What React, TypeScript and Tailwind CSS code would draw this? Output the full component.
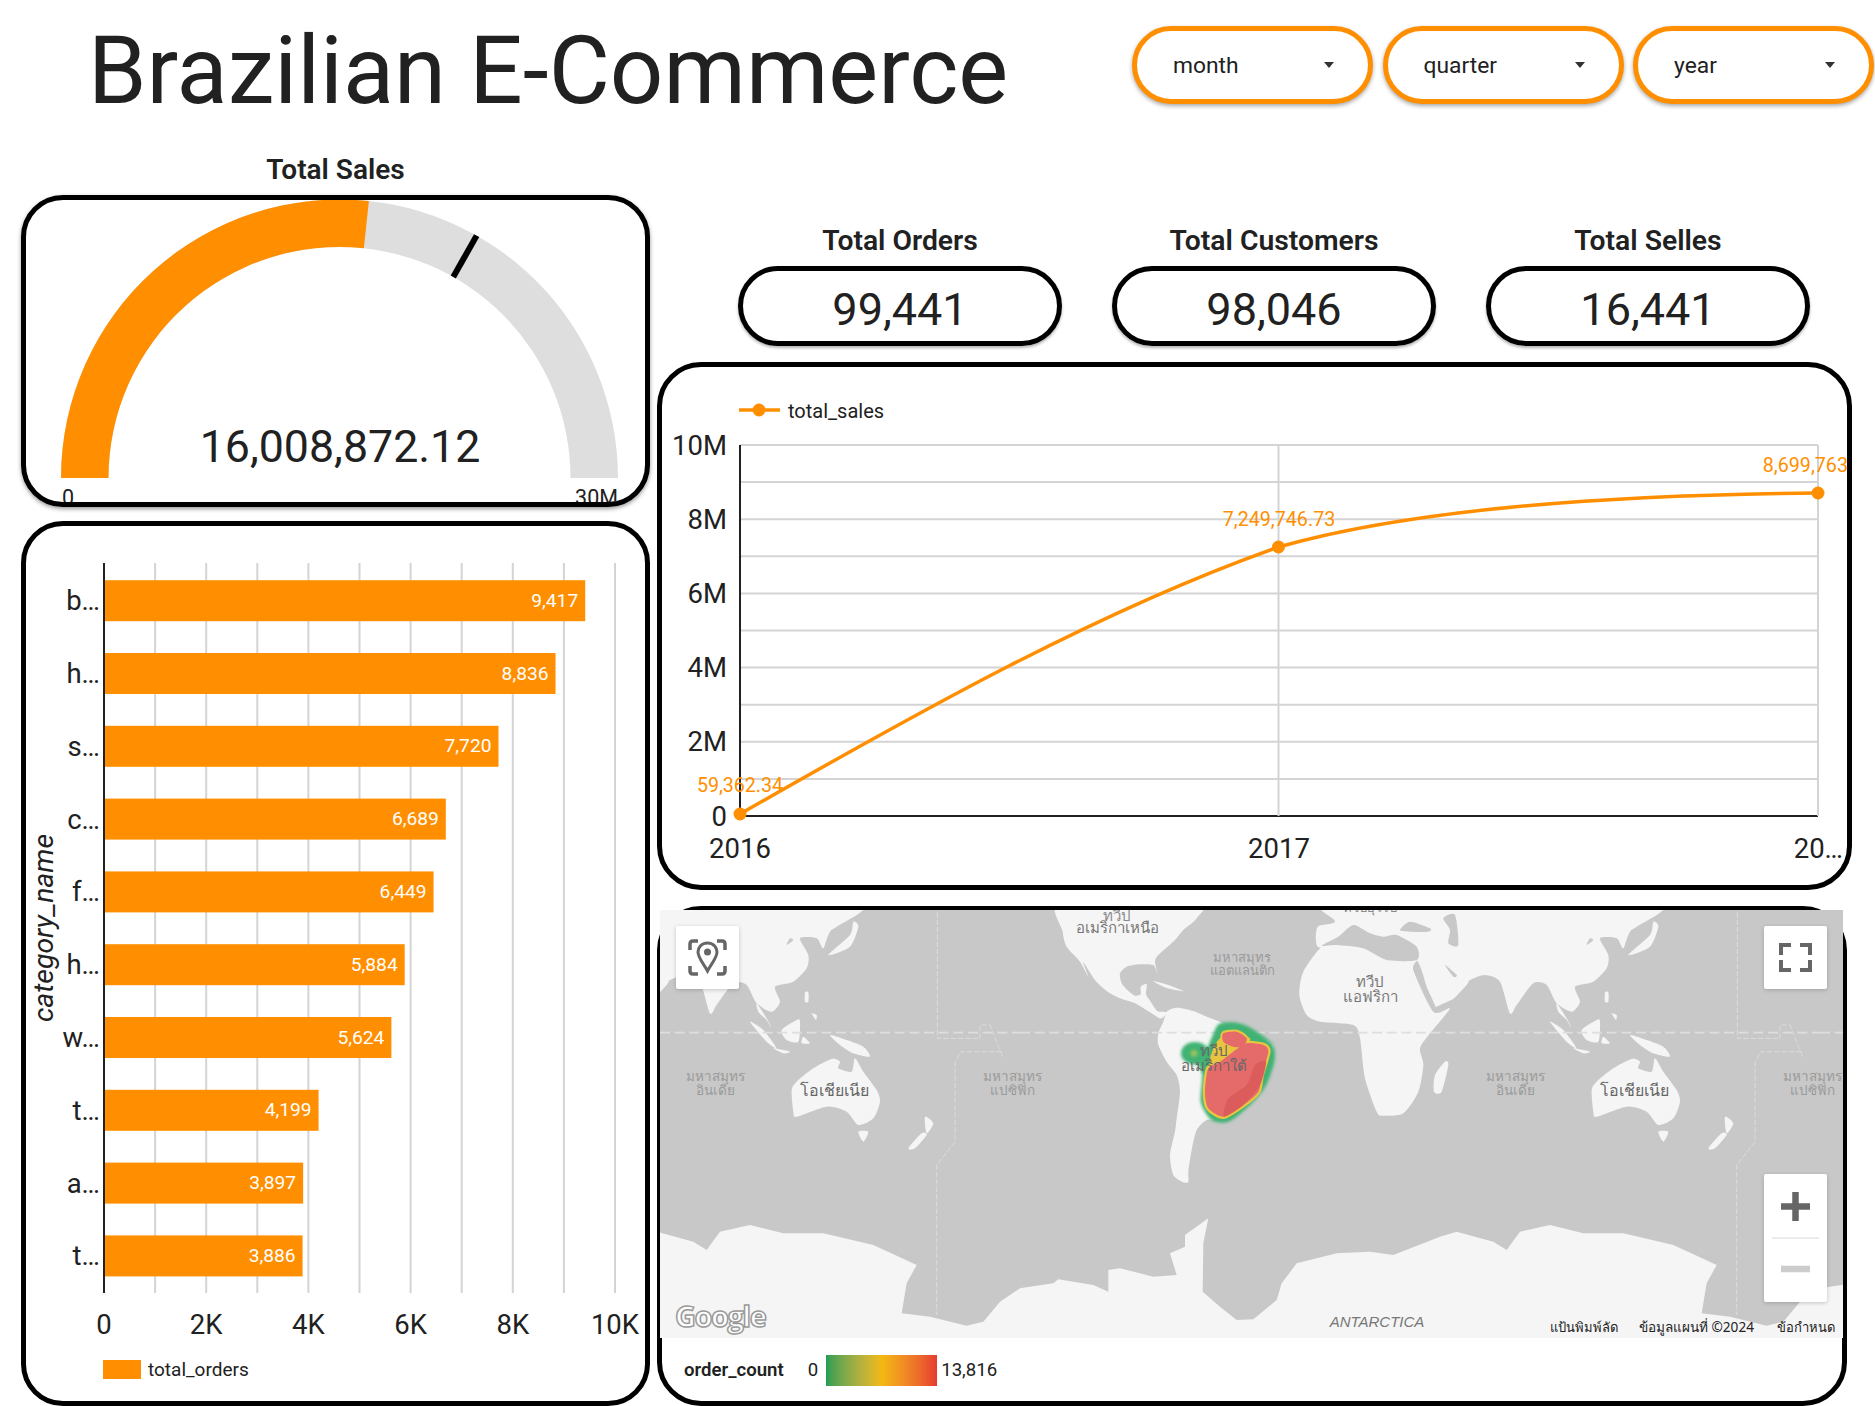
import React from "react";

const ORANGE = "#ff8f00";
const bars: [string, number][] = [
  ["b…", 9417], ["h…", 8836], ["s…", 7720], ["c…", 6689], ["f…", 6449],
  ["h…", 5884], ["w…", 5624], ["t…", 4199], ["a…", 3897], ["t…", 3886],
];
const X0 = 104;
const PER_K = 51.1;
const LINE_Y = (m: number) => 816 - m * 37.1;

function smooth(points: string) {
  const p = points.trim().split(/\s+/).map((s) => s.split(",").map(Number));
  const n = p.length;
  let d = `M${p[0][0]} ${p[0][1]}`;
  for (let i = 0; i < n; i++) {
    const a = p[(i - 1 + n) % n], b = p[i], c = p[(i + 1) % n], e = p[(i + 2) % n];
    d += ` C${b[0] + (c[0] - a[0]) / 8} ${b[1] + (c[1] - a[1]) / 8} ${c[0] - (e[0] - b[0]) / 8} ${c[1] - (e[1] - b[1]) / 8} ${c[0]} ${c[1]}`;
  }
  return d + " Z";
}

function Dropdown({ label }: { label: string }) {
  return (
    <div className="flex h-[78px] w-[241px] items-center justify-between rounded-[39px] border-[5px] border-[#ff8f00] bg-white pt-[2px] pl-[36px] pr-[34px] text-[22.8px] shadow-[0_2px_4px_rgba(0,0,0,0.35)]">
      <span>{label}</span>
      <svg width="10" height="6" viewBox="0 0 10 6" className="-mt-[3px]"><polygon points="0,0 10,0 5,6" fill="#333" /></svg>
    </div>
  );
}

function Score({ title, value }: { title: string; value: string }) {
  return (
    <div className="flex w-[324px] flex-col items-center">
      <div className="h-[30px] text-[28.3px] leading-[30px] font-semibold">{title}</div>
      <div className="mt-[10px] flex h-[80px] w-full items-center justify-center rounded-[40px] border-[5px] border-black pt-[7px] text-[45px] shadow-[0_2px_3px_rgba(0,0,0,0.3)]">
        {value}
      </div>
    </div>
  );
}

function Gauge() {
  const R = 278.5, r = 231, cx = 339.5, cy = 478;
  const a = ((180 - (16008872.12 / 30000000) * 180) * Math.PI) / 180;
  const t = (60.5 * Math.PI) / 180;
  const px = (rad: number, ang: number) => `${cx + rad * Math.cos(ang)} ${cy - rad * Math.sin(ang)}`;
  return (
    <svg className="block h-full w-full" viewBox="26 200 619 302" overflow="hidden">
      <path d={`M${cx - R} ${cy} A${R} ${R} 0 0 1 ${cx + R} ${cy} L${cx + r} ${cy} A${r} ${r} 0 0 0 ${cx - r} ${cy} Z`} fill="#dedede" />
      <path d={`M${cx - R} ${cy} A${R} ${R} 0 0 1 ${px(R, a)} L${px(r, a)} A${r} ${r} 0 0 0 ${cx - r} ${cy} Z`} fill={ORANGE} />
      <line x1={cx + r * Math.cos(t)} y1={cy - r * Math.sin(t)} x2={cx + R * Math.cos(t)} y2={cy - R * Math.sin(t)} stroke="#000" strokeWidth="6" />
      <text x="340" y="462" textAnchor="middle" fontSize="44.7" fill="#212121">16,008,872.12</text>
      <text x="62" y="505" fontSize="21.5" fill="#212121">0</text>
      <text x="618" y="505" textAnchor="end" fontSize="21.5" fill="#212121">30M</text>
    </svg>
  );
}

function BarChart() {
  return (
    <svg className="block h-full w-full" viewBox="26 526 619 875">
      {Array.from({ length: 10 }, (_, i) => (
        <line key={i} x1={X0 + (i + 1) * PER_K} x2={X0 + (i + 1) * PER_K} y1="563" y2="1293" stroke="#d4d4d4" strokeWidth="2" />
      ))}
      {bars.map(([l, v], i) => {
        const y = 580.2 + i * 72.8;
        const w = (v / 1000) * PER_K;
        return (
          <g key={i}>
            <rect x={X0} y={y} width={w} height="41" fill={ORANGE} />
            <text x={X0 + w - 7} y={y + 20} dominantBaseline="central" textAnchor="end" fontSize="19.2" fill="#fff">
              {v.toLocaleString("en-US")}
            </text>
            <text x="100" y={y + 20.5} dominantBaseline="central" textAnchor="end" fontSize="27.5" fill="#212121">{l}</text>
          </g>
        );
      })}
      <line x1={X0} x2={X0} y1="563" y2="1293" stroke="#212121" strokeWidth="2" />
      {["0", "2K", "4K", "6K", "8K", "10K"].map((l, i) => (
        <text key={l} x={X0 + i * 2 * PER_K} y="1324" dominantBaseline="central" textAnchor="middle" fontSize="27.5" fill="#212121">{l}</text>
      ))}
      <text transform="translate(43 928) rotate(-90)" textAnchor="middle" dominantBaseline="central" fontSize="28.4" fontStyle="italic" fill="#212121">category_name</text>
      <rect x="103" y="1360" width="38" height="19" fill={ORANGE} />
      <text x="148" y="1369" dominantBaseline="central" fontSize="19" fill="#212121">total_orders</text>
    </svg>
  );
}

function LineChart() {
  const hs = Array.from({ length: 11 }, (_, i) => i);
  return (
    <svg className="block h-full w-full" viewBox="662 367 1185 518" overflow="visible">
      {hs.map((i) => (
        <line key={i} x1="740" x2="1818" y1={LINE_Y(i)} y2={LINE_Y(i)} stroke={i === 0 ? "#212121" : "#d4d4d4"} strokeWidth="2" />
      ))}
      {[1278.5, 1818].map((x) => (
        <line key={x} x1={x} x2={x} y1="445" y2="816" stroke="#d4d4d4" strokeWidth="2" />
      ))}
      <line x1="740" x2="740" y1="445" y2="816" stroke="#212121" strokeWidth="2" />
      {[0, 2, 4, 6, 8, 10].map((m) => (
        <text key={m} x="727" y={LINE_Y(m)} dominantBaseline="central" textAnchor="end" fontSize="27.5" fill="#212121">
          {m === 0 ? "0" : `${m}M`}
        </text>
      ))}
      <path d="M740 814 C920 711 1100 610 1278.5 547 C1420 507 1620 495 1818 493" fill="none" stroke={ORANGE} strokeWidth="3.5" />
      {[[740, 814], [1278.5, 547], [1818, 493]].map(([x, y]) => (
        <circle key={x} cx={x} cy={y} r="6.5" fill={ORANGE} />
      ))}
      <line x1="739" x2="780" y1="410" y2="410" stroke={ORANGE} strokeWidth="3.5" />
      <circle cx="759" cy="410" r="6.5" fill={ORANGE} />
      <text x="788" y="411" dominantBaseline="central" fontSize="20" fill="#212121">total_sales</text>
      <text x="740" y="785" dominantBaseline="central" textAnchor="middle" fontSize="19.6" fill={ORANGE}>59,362.34</text>
      <text x="1279" y="519" dominantBaseline="central" textAnchor="middle" fontSize="19.7" fill={ORANGE}>7,249,746.73</text>
      <text x="1848" y="465" dominantBaseline="central" textAnchor="end" fontSize="19.7" fill={ORANGE}>8,699,763</text>
      <text x="740" y="848" dominantBaseline="central" textAnchor="middle" fontSize="27.5" fill="#212121">2016</text>
      <text x="1279" y="848" dominantBaseline="central" textAnchor="middle" fontSize="27.5" fill="#212121">2017</text>
      <text x="1843" y="848" dominantBaseline="central" textAnchor="end" fontSize="27.5" fill="#212121">20…</text>
    </svg>
  );
}

const LAND = [
  // North America
  "125,-20 540,-20 530,40 490,75 465,105 415,150 405,170 412,205 400,180 360,178 320,185 300,205 305,235 325,258 345,272 362,268 362,245 380,238 378,268 392,290 412,318 440,322 425,340 410,335 390,322 345,295 300,280 260,258 225,225 190,172 205,215 180,170 140,125 128,80",
  // Cuba, Hispaniola
  "400,228 445,240 490,258 465,255 430,245",
  // South America
  "440,320 470,308 520,318 560,335 600,350 640,370 700,385 760,420 745,480 720,540 680,590 625,630 590,645 560,645 530,675 515,735 505,800 505,830 490,832 460,810 450,750 465,680 470,640 480,560 470,510 440,470 415,420 415,385 430,350",
  // Africa
  "905,125 850,200 838,270 860,330 900,350 1000,360 1020,400 1035,520 1070,620 1090,632 1150,625 1195,560 1210,480 1200,430 1230,385 1290,310 1240,320 1180,195 1190,160 1100,160 1030,130 950,120",
  // Eurasia
  "945,-20 945,50 893,65 893,125 960,125 1100,170 1190,165 1240,305 1290,290 1340,240 1350,225 1395,210 1440,230 1470,325 1490,300 1540,235 1580,240 1610,295 1655,320 1680,290 1665,245 1720,230 1760,190 1765,150 1740,100 1790,100 1810,130 1830,80 1905,-20",
  // Malay peninsula
  "1610,295 1640,340 1655,370 1640,345 1615,320",
  // Japan
  "1900,50 1915,65 1890,125 1825,150 1890,90",
  // Sumatra, Java, Borneo, Sulawesi
  "1590,350 1630,375 1670,430 1640,410",
  "1660,430 1710,440 1690,445",
  "1685,375 1730,345 1740,350 1735,410 1700,405",
  "1750,395 1770,415 1745,415",
  // Philippines
  "1755,262 1765,262 1765,290 1755,290",
  "1775,325 1790,330 1788,345",
  // New Guinea
  "1830,390 1880,405 1930,425 1950,455 1900,445 1860,420",
  // Madagascar
  "1275,470 1285,480 1265,560 1242,560 1245,510",
  // Australia
  "1715,555 1730,530 1780,490 1835,462 1860,470 1855,490 1895,500 1905,460 1930,500 1970,555 1980,590 1960,640 1915,660 1880,620 1820,605 1730,635 1720,620",
  // Tasmania
  "1915,680 1945,680 1930,710",
  // New Zealand
  "2115,635 2140,655 2120,685",
  "2105,685 2065,730 2085,730 2120,690",
];
const ANTARCTICA =
  "0,1150 100,1135 115,1123 220,1140 265,1160 265,1095 300,1090 400,1115 470,1110 450,1045 495,1025 495,990 565,940 550,1015 548,1160 600,1205 650,1245 700,1243 770,1185 785,1135 830,1075 950,1045 1050,1040 1120,1050 1260,995 1310,980 1420,1010 1460,1035 1500,980 1590,960 1690,985 1810,985 1960,1020 2090,1080 2060,1135 2045,1225 2130,1235 2240,1262 2290,1250 2340,1190 2400,1150 2400,1310 0,1310";
const SEAS = [
  "905,122 955,95 1000,60 1050,85 1090,95 1130,90 1190,125 1190,165 1100,165 1030,130 950,120",
  "1140,75 1170,50 1230,70 1225,80 1170,80",
  "1270,40 1305,30 1315,120 1285,115 1290,75",
  "1180,195 1195,198 1245,300 1235,300",
  "1275,180 1310,210 1300,215",
  "1240,310 1335,268 1340,275 1250,315",
  "1710,100 1720,105 1700,120",
];
const RED_MAIN = "565,490 600,470 640,440 680,415 730,420 745,440 725,510 715,560 670,600 610,635 565,610 555,560";
const RED_TOP = "610,385 650,380 680,400 670,425 640,425 610,410";

function MapLabel({ x, y, lines, size = 15, color = "#9a9a9a" }: { x: number; y: number; lines: string[]; size?: number; color?: string }) {
  return (
    <text x={x} y={y} textAnchor="middle" fontSize={size} fill={color} fontFamily="'Noto Sans','DejaVu Sans',serif">
      {lines.map((l, i) => (
        <tspan key={i} x={x} dy={i === 0 ? 0 : size}>{l}</tspan>
      ))}
    </text>
  );
}

function WorldMap() {
  return (
    <svg className="absolute inset-0 block h-full w-full" viewBox="660 910 1183 428">
      <defs>
        <filter id="b0" x="-5%" y="-5%" width="110%" height="110%"><feGaussianBlur stdDeviation="0.5" /></filter>
        <filter id="b1" x="-40%" y="-40%" width="180%" height="180%"><feGaussianBlur stdDeviation="5" /></filter>
        <filter id="b2" x="-20%" y="-20%" width="140%" height="140%"><feGaussianBlur stdDeviation="2" /></filter>
      </defs>
      <rect x="660" y="910" width="1183" height="428" fill="#c8c8c8" />
      <g filter="url(#b0)">
        {[-800, 0, 800].map((dx) => (
          <g key={dx} transform={`translate(${1020 + dx} 905) scale(0.33333)`}>
            {LAND.map((p, i) => <path key={i} d={smooth(p)} fill="#f5f5f5" />)}
            <polygon points={ANTARCTICA} fill="#f5f5f5" />
            {SEAS.map((p, i) => <path key={i} d={smooth(p)} fill="#c8c8c8" />)}
            <path d="M2152 0 V400 H2280 V360 H2310 L2350 460 M2345 440 H2225 L2205 470 V710 L2150 780 V1230" fill="none" stroke="#dcdcdc" strokeWidth="3" strokeDasharray="16 6" />
            <line x1="0" x2="2400" y1="383" y2="383" stroke="#dedede" strokeWidth="5" strokeDasharray="30 14" />
          </g>
        ))}
      </g>
      <g transform="translate(1020 905) scale(0.33333)">
        <ellipse cx="525" cy="445" rx="42" ry="34" fill="#3fb273" filter="url(#b1)" />
        <path d={smooth("600,362 640,358 690,374 752,420 757,470 732,540 690,592 625,644 578,640 548,590 553,510 540,470 570,425 585,390")} fill="#3fb273" stroke="#3fb273" strokeWidth="12" filter="url(#b1)" />
        <circle cx="522" cy="445" r="10" fill="#9cc45a" filter="url(#b1)" />
        <path d={smooth("600,400 690,400 650,450 570,475")} fill="#e9c43f" filter="url(#b2)" />
        <path d={smooth(RED_MAIN)} fill="#e9c43f" stroke="#e9c43f" strokeWidth="14" filter="url(#b2)" />
        <path d={smooth(RED_TOP)} fill="#e9c43f" stroke="#e9c43f" strokeWidth="12" filter="url(#b2)" />
        <path d={smooth(RED_MAIN)} fill="#e56b6b" />
        <path d={smooth(RED_TOP)} fill="#e56b6b" />
        <path d={smooth("738,470 720,540 670,600 612,635 625,580 680,540 705,480")} fill="#dc5c5c" />
      </g>
      <MapLabel x={1117} y={921} lines={["ทวีป"]} color="#8a8a8a" />
      <MapLabel x={1117} y={933} lines={["อเมริกาเหนือ"]} color="#777" />
      <MapLabel x={1242} y={962} lines={["มหาสมุทร", "แอตแลนติก"]} size={13} />
      <MapLabel x={1370} y={987} lines={["ทวีป", "แอฟริกา"]} color="#777" />
      <MapLabel x={1370} y={912} lines={["ทวีปยุโรป"]} size={13} color="#8a8a8a" />
      <MapLabel x={1214} y={1056} lines={["ทวีป", "อเมริกาใต้"]} color="#666" />
      <MapLabel x={715} y={1081} lines={["มหาสมุทร", "อินเดีย"]} size={13.5} />
      <MapLabel x={1515} y={1081} lines={["มหาสมุทร", "อินเดีย"]} size={13.5} />
      <MapLabel x={1012} y={1081} lines={["มหาสมุทร", "แปซิฟิก"]} size={13.5} />
      <MapLabel x={1812} y={1081} lines={["มหาสมุทร", "แปซิฟิก"]} size={13.5} />
      <MapLabel x={834} y={1096} lines={["โอเชียเนีย"]} size={16} color="#666" />
      <MapLabel x={1634} y={1096} lines={["โอเชียเนีย"]} size={16} color="#666" />
      <text x="1377" y="1327" textAnchor="middle" fontSize="15" fontStyle="italic" fill="#777" fontFamily="'Liberation Sans',sans-serif">ANTARCTICA</text>
      <text x="675" y="1327" fontSize="29" fontWeight="700" fill="#fff" stroke="#9a9a9a" strokeWidth="1.5" fontFamily="'Open Sans',sans-serif" letterSpacing="-1.5">Google</text>
      <text x="1550" y="1332" fontSize="13" fill="#222" fontFamily="'Noto Sans','DejaVu Sans',serif">แป้นพิมพ์ลัด</text>
      <text x="1639" y="1332" fontSize="13.6" fill="#222" fontFamily="'Noto Sans','DejaVu Sans',serif">ข้อมูลแผนที่ ©2024</text>
      <text x="1777" y="1332" fontSize="13" fill="#222" fontFamily="'Noto Sans','DejaVu Sans',serif">ข้อกำหนด</text>
    </svg>
  );
}

function MapButton({ className, children }: { className: string; children: React.ReactNode }) {
  return <div className={`absolute rounded-[2px] bg-white shadow-[0_1px_4px_rgba(0,0,0,0.2)] ${className}`}>{children}</div>;
}

export default function App() {
  return (
    <div className="h-[1406px] w-[1875px] overflow-hidden bg-white font-[Roboto,sans-serif] text-[#212121]">
      <header className="flex h-[150px]">
        <h1 className="mt-[15px] ml-[88px] text-[94px] leading-[112px] font-normal">Brazilian E-Commerce</h1>
        <div className="mt-[26px] mr-px ml-auto flex h-[78px] gap-[9.5px]">
          <Dropdown label="month" />
          <Dropdown label="quarter" />
          <Dropdown label="year" />
        </div>
      </header>
      <div className="flex gap-[7px] pl-[21px]">
        <div className="w-[629px]">
          <div className="flex h-[45px] items-center justify-center pb-[5px] text-[28px] font-semibold">Total Sales</div>
          <div className="h-[312px] rounded-[42px] border-[5px] border-black bg-white shadow-[0_2px_4px_rgba(0,0,0,0.4)]">
            <Gauge />
          </div>
          <div className="mt-[14px] h-[885px] rounded-[42px] border-[5px] border-black">
            <BarChart />
          </div>
        </div>
        <div className="w-[1195px]">
          <div className="mt-[76px] flex gap-[50px] pl-[81px]">
            <Score title="Total Orders" value="99,441" />
            <Score title="Total Customers" value="98,046" />
            <Score title="Total Selles" value="16,441" />
          </div>
          <div className="mt-[16px] h-[528px] rounded-[44px] border-[5px] border-black">
            <LineChart />
          </div>
          <div className="mt-[16px] h-[500px] w-[1190px] rounded-[44px] border-[5px] border-black">
            <div className="relative -mt-px -ml-[2px] h-[428px] w-[1183px]">
              <WorldMap />
              <MapButton className="top-[16px] left-[16px] h-[63px] w-[63px]">
                <svg viewBox="0 0 63 63" className="h-full w-full">
                  <path d="M14 24 V18 Q14 15 17 15 H22 M41 15 H46 Q49 15 49 18 V24 M14 40 V45 Q14 48 17 48 H22 M41 48 H46 Q49 48 49 45 V40" fill="none" stroke="#666" strokeWidth="3.5" />
                  <path d="M31.5 17 C25 17 22 22 22 26 C22 32 28 38 31.5 45 C35 38 41 32 41 26 C41 22 38 17 31.5 17 Z" fill="none" stroke="#666" strokeWidth="3" />
                  <circle cx="31.5" cy="26" r="3.5" fill="#666" />
                </svg>
              </MapButton>
              <MapButton className="top-[16px] right-[16px] h-[63px] w-[63px]">
                <svg viewBox="0 0 63 63" className="h-full w-full">
                  <path d="M17 29 V19 H27 M36 19 H46 V29 M17 34 V44 H27 M36 44 H46 V34" fill="none" stroke="#666" strokeWidth="4" />
                </svg>
              </MapButton>
              <MapButton className="top-[264px] right-[16px] h-[128px] w-[63px]">
                <svg viewBox="0 0 63 128" className="h-full w-full">
                  <path d="M31.5 18 V47 M17 32.5 H46" fill="none" stroke="#666" strokeWidth="6.5" />
                  <line x1="8" x2="55" y1="64" y2="64" stroke="#e6e6e6" strokeWidth="1.5" />
                  <line x1="17" x2="46" y1="95" y2="95" stroke="#ccc" strokeWidth="6.5" />
                </svg>
              </MapButton>
            </div>
            <div className="flex items-center pt-[17px] pl-[22px] text-[18.6px]">
              <span className="font-semibold">order_count</span>
              <span className="ml-[24px]">0</span>
              <div className="ml-[8px] h-[31px] w-[111px] bg-gradient-to-r from-[#1e9e55] via-[#f2b90f] to-[#e53a2e]" />
              <span className="ml-[4px]">13,816</span>
            </div>
          </div>
        </div>
      </div>
    </div>
  );
}
